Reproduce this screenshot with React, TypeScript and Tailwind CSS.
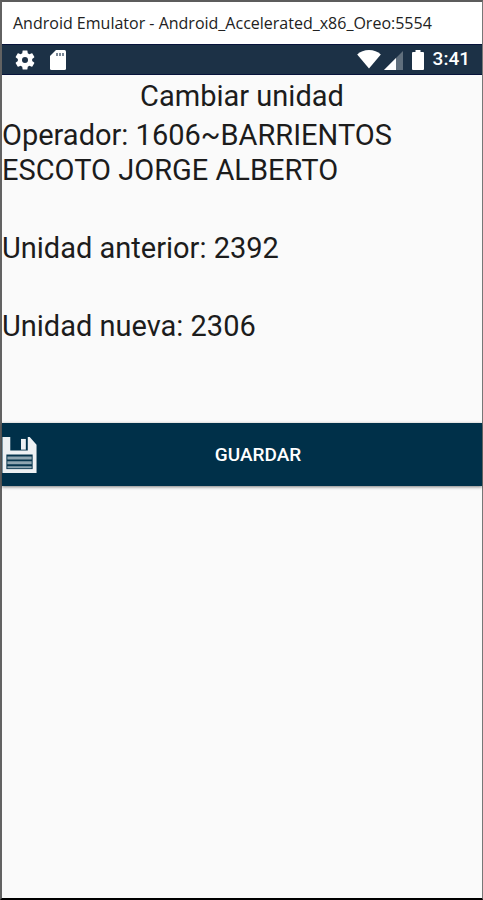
const unit = {
  operator: "1606~BARRIENTOS ESCOTO JORGE ALBERTO",
  previous: "2392",
  next: "2306",
};

function GearIcon() {
  return (
    <svg viewBox="2 2 20 20" className="w-5 h-5" fill="currentColor" aria-hidden="true">
      <path d="M19.14 12.94c.04-.3.06-.61.06-.94s-.02-.64-.07-.94l2.03-1.58c.18-.14.23-.41.12-.61l-1.92-3.32c-.12-.22-.37-.29-.59-.22l-2.39.96c-.5-.38-1.03-.7-1.62-.94l-.36-2.54c-.04-.24-.24-.41-.48-.41h-3.84c-.24 0-.43.17-.47.41l-.36 2.54c-.59.24-1.13.57-1.62.94l-2.39-.96c-.22-.08-.47 0-.59.22L2.74 8.87c-.12.21-.08.47.12.61l2.03 1.58c-.05.3-.09.63-.09.94s.02.64.07.94l-2.03 1.58c-.18.14-.23.41-.12.61l1.92 3.32c.12.22.37.29.59.22l2.39-.96c.5.38 1.03.7 1.62.94l.36 2.54c.05.24.24.41.48.41h3.84c.24 0 .44-.17.47-.41l.36-2.54c.59-.24 1.13-.56 1.62-.94l2.39.96c.22.08.47 0 .59-.22l1.92-3.32c.12-.22.07-.47-.12-.61l-2.01-1.58zM12 15a3 3 0 1 1 0-6 3 3 0 0 1 0 6z" />
    </svg>
  );
}

function SdCardIcon() {
  return (
    <svg viewBox="0 0 16 20" className="w-4 h-5" aria-hidden="true">
      <path d="M6 0h8.500a1.500 1.500 0 0 1 1.500 1.500v17a1.500 1.500 0 0 1-1.500 1.500h-13A1.500 1.500 0 0 1 0 18.500V6z" fill="currentColor" />
      <path d="M6 3h2v3H6zM9 3h2v3H9zM12 3h2v3h-2z" fill="#7b8896" />
    </svg>
  );
}

function WifiIcon() {
  return (
    <svg viewBox="0 0 24 20" className="w-6 h-5" fill="currentColor" aria-hidden="true">
      <path d="M12 18.500.200 4.500C3 1.500 7.500 0 12 0S21 1.500 23.800 4.500z" />
    </svg>
  );
}

function SignalIcon() {
  return (
    <svg viewBox="0 0 20 20" className="w-5 h-5" fill="currentColor" aria-hidden="true">
      <path d="M0 20 19 1v19z" opacity="0.300" />
      <path d="M0 20 12 8v12z" />
    </svg>
  );
}

function BatteryIcon() {
  return (
    <svg viewBox="0 0 12 20" className="w-3 h-5" fill="currentColor" aria-hidden="true">
      <path d="M3.500 0h5v2H11a1 1 0 0 1 1 1v16a1 1 0 0 1-1 1H1a1 1 0 0 1-1-1V3a1 1 0 0 1 1-1h2.500z" />
    </svg>
  );
}

function SaveIcon() {
  return (
    <svg viewBox="0 0 36 37" className="w-9 h-9" aria-hidden="true">
      <path d="M0 0h8v14h18V0h2l7 8v29H0z" fill="#eef1f3" />
      <path d="M19 2h5v11h-5z" fill="#eef1f3" />
      <path d="M4 18h27v15H4z" fill="#06344c" />
      <path d="M5 20h25v3H5zM5 25h25v3H5zM5 30h25v2H5z" fill="#8fa5b0" />
    </svg>
  );
}

export default function App() {
  return (
    <div className="min-h-screen flex flex-col bg-[#fafafa] border-t-2 border-l-2 border-r border-b-2 border-t-[#5c5c5c] border-l-[#626262] border-r-[#777777] border-b-black font-[Roboto,sans-serif]">
      {/* Window title */}
      <header className="h-[42px] flex items-center px-[11px] bg-white text-base text-[#222222] font-['Open_Sans',sans-serif] whitespace-nowrap">
        Android Emulator - Android_Accelerated_x86_Oreo:5554
      </header>

      {/* Status bar */}
      <div className="h-[31px] flex items-center justify-between px-3 bg-[#1c3146] border-y border-[#07133a] text-white">
        <div className="flex items-center gap-[15px] pl-px">
          <GearIcon />
          <SdCardIcon />
        </div>
        <div className="flex items-center gap-2">
          <div className="flex items-center gap-[3px]">
            <WifiIcon />
            <SignalIcon />
          </div>
          <div className="flex items-center gap-[9px]">
            <BatteryIcon />
            <span className="text-[19px] font-medium">3:41</span>
          </div>
        </div>
      </div>

      <main className="pt-1 text-[29px] leading-[35px] text-[#1c1c1c]">
        <h1 className="text-center">Cambiar unidad</h1>
        <div className="flex flex-col gap-[43px] pt-1">
          <p>{`Operador: ${unit.operator}`}</p>
          <p>{`Unidad anterior: ${unit.previous}`}</p>
          <p>{`Unidad nueva: ${unit.next}`}</p>
        </div>
        <button
          type="button"
          className="mt-[79px] w-full h-[63px] flex items-center bg-[#003049] text-white shadow-[0_1px_3px_rgba(0,0,0,0.5)]"
        >
          <SaveIcon />
          <span className="flex-1 pr-1 text-center text-[19px] font-medium">GUARDAR</span>
        </button>
      </main>
    </div>
  );
}
